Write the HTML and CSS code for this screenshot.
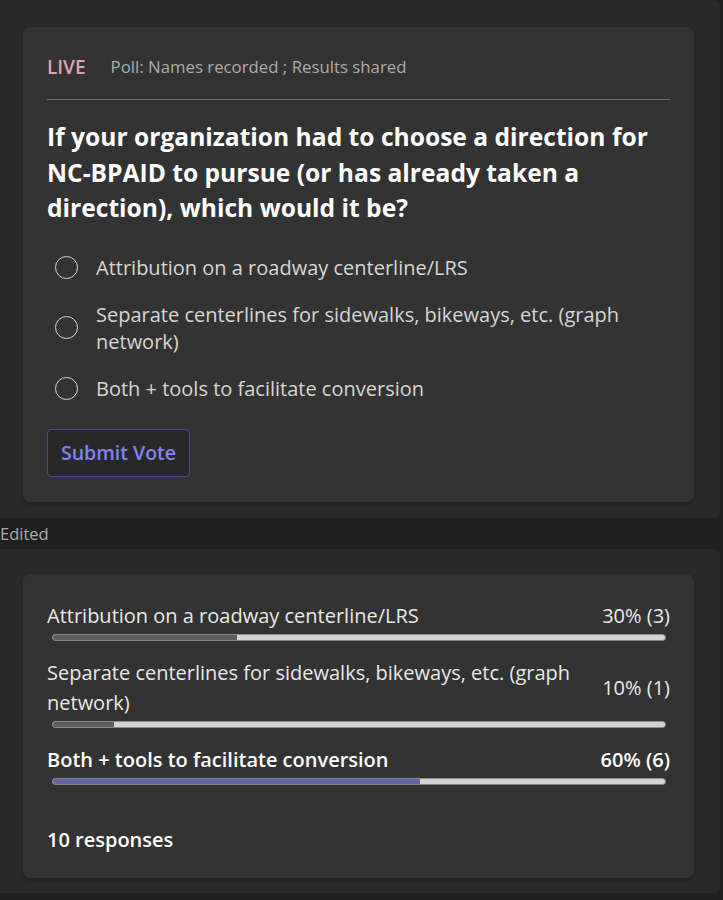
FILE: index.html
```html
<!DOCTYPE html>
<html lang="en">
<head>
<meta charset="utf-8">
<title>Poll</title>
<link rel="stylesheet" href="styles.css">
</head>
<body>
<section class="panel panel-vote">
  <div class="card vote-card">
    <header class="poll-head">
      <span class="live">LIVE</span>
      <span class="poll-meta">Poll: Names recorded ; Results shared</span>
    </header>
    <h1 class="question">If your organization had to choose a direction for NC-BPAID to pursue (or has already taken a direction), which would it be?</h1>
    <ul class="options">
      <li class="option"><span class="radio"></span><span class="option-text">Attribution on a roadway centerline/LRS</span></li>
      <li class="option"><span class="radio"></span><span class="option-text">Separate centerlines for sidewalks, bikeways, etc. (graph network)</span></li>
      <li class="option"><span class="radio"></span><span class="option-text">Both + tools to facilitate conversion</span></li>
    </ul>
    <button class="submit" type="button">Submit Vote</button>
  </div>
</section>
<div class="edited">Edited</div>
<section class="panel panel-results">
  <div class="card results-card">
    <div class="result">
      <div class="result-row"><span class="result-label">Attribution on a roadway centerline/LRS</span><span class="result-pct">30% (3)</span></div>
      <div class="bar"><div class="bar-fill" style="width:30%"></div></div>
    </div>
    <div class="result">
      <div class="result-row"><span class="result-label">Separate centerlines for sidewalks, bikeways, etc. (graph network)</span><span class="result-pct">10% (1)</span></div>
      <div class="bar"><div class="bar-fill" style="width:10%"></div></div>
    </div>
    <div class="result result-top">
      <div class="result-row"><span class="result-label">Both + tools to facilitate conversion</span><span class="result-pct">60% (6)</span></div>
      <div class="bar"><div class="bar-fill" style="width:60%"></div></div>
    </div>
    <div class="responses">10 responses</div>
  </div>
</section>
</body>
</html>
```
FILE: styles.css
```css
* { box-sizing: border-box; }
html, body {
  margin: 0;
  padding: 0;
  background: #1f1f1f;
  font-family: "Open Sans", "Noto Sans", sans-serif;
  color: #ffffff;
  overflow: hidden;
}
.panel {
  margin-left: -10px;
  width: 730px;
  background: #292929;
  border-radius: 6px;
}
.panel-vote {
  padding: 27px 26px 16px 33px;
}
.panel-results {
  padding: 25px 26px 15px 33px;
}
.card {
  background: #333333;
  border-radius: 8px;
  box-shadow: 0 2px 3px rgba(0, 0, 0, 0.28);
}
.vote-card {
  padding: 29px 24px 25px 24px;
}
.poll-head {
  display: flex;
  align-items: center;
  gap: 25px;
  height: 22px;
}
.live {
  font-size: 19px;
  font-weight: 600;
  color: #dba4af;
  line-height: 22px;
}
.poll-meta {
  font-size: 16.8px;
  color: #adadad;
  line-height: 22px;
}
.question {
  margin: 21px 0 0 0;
  padding-top: 19px;
  border-top: 1px solid #6e6e6e;
  font-size: 24.6px;
  font-weight: 700;
  line-height: 35.5px;
  color: #ffffff;
}
.options {
  list-style: none;
  margin: 28px 0 0 0;
  padding: 0;
  display: flex;
  flex-direction: column;
  gap: 20px;
}
.option {
  display: flex;
  align-items: center;
  padding-left: 8px;
  gap: 18px;
}
.radio {
  flex: none;
  width: 23px;
  height: 23px;
  border: 1.6px solid #d6d6d6;
  border-radius: 50%;
}
.option-text {
  font-size: 20px;
  line-height: 27px;
  color: #d6d6d6;
}
.submit {
  margin-top: 27px;
  width: 143px;
  height: 48px;
  background: #282828;
  border: 1px solid #4a4c86;
  border-radius: 4px;
  color: #7f85f5;
  font-family: "Open Sans", "Noto Sans", sans-serif;
  font-size: 19.5px;
  font-weight: 600;
  padding: 0;
  display: flex;
  align-items: center;
  justify-content: center;
}
.edited {
  height: 31px;
  line-height: 31px;
  font-size: 16.5px;
  color: #adadad;
}
.results-card {
  padding: 27px 24px 23px 24px;
}
.result + .result {
  margin-top: 17px;
}
.result-row {
  display: flex;
  align-items: center;
  gap: 30px;
}
.result-label {
  flex: 1;
  font-size: 20px;
  line-height: 30px;
  color: #e8e8e8;
}
.result-pct {
  flex: none;
  font-size: 20px;
  line-height: 30px;
  color: #e8e8e8;
}
.result-top .result-label,
.result-top .result-pct {
  font-weight: 600;
  color: #ffffff;
}
.bar {
  margin: 3px 4px 0 5px;
  height: 7px;
  background: #d2d2d2;
  border-radius: 4px;
  border: 1px solid #8a8a8a;
  overflow: hidden;
}
.bar-fill {
  height: 100%;
  background: #5c5c5c;
}
.result-top .bar-fill {
  background: #6264a7;
}
.responses {
  margin-top: 40px;
  font-size: 20px;
  line-height: 30px;
  font-weight: 600;
  color: #ffffff;
}
```
